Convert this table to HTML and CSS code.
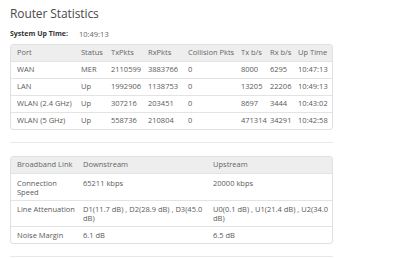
FILE: index.html
```html
<!DOCTYPE html>
<html>
<head>
<meta charset="utf-8">
<link rel="stylesheet" href="styles.css">
</head>
<body>
<div class="page">
  <h1 class="title">Router Statistics</h1>
  <div class="uptime"><span class="uptime-label">System Up Time:</span><span class="uptime-value">10:49:13</span></div>
  <div class="card first">
    <table class="grid ports">
      <thead>
        <tr><th class="c-port">Port</th><th class="c-status">Status</th><th class="c-tx">TxPkts</th><th class="c-rx">RxPkts</th><th class="c-col">Collision Pkts</th><th class="c-txb">Tx b/s</th><th class="c-rxb">Rx b/s</th><th class="c-up">Up Time</th></tr>
      </thead>
      <tbody>
        <tr><td>WAN</td><td>MER</td><td>2110599</td><td>3883766</td><td>0</td><td>8000</td><td>6295</td><td>10:47:13</td></tr>
        <tr><td>LAN</td><td>Up</td><td>1992906</td><td>1138753</td><td>0</td><td>13205</td><td>22206</td><td>10:49:13</td></tr>
        <tr><td>WLAN (2.4 GHz)</td><td>Up</td><td>307216</td><td>203451</td><td>0</td><td>8697</td><td>3444</td><td>10:43:02</td></tr>
        <tr><td>WLAN (5 GHz)</td><td>Up</td><td>558736</td><td>210804</td><td>0</td><td>471314</td><td>34291</td><td>10:42:58</td></tr>
      </tbody>
    </table>
  </div>
  <hr class="rule">
  <div class="card">
    <table class="grid link">
      <thead>
        <tr><th class="c-link">Broadband Link</th><th class="c-down">Downstream</th><th class="c-upst">Upstream</th></tr>
      </thead>
      <tbody>
        <tr class="tall"><td>Connection Speed</td><td>65211 kbps</td><td>20000 kbps</td></tr>
        <tr><td>Line Attenuation</td><td>D1(11.7 dB) , D2(28.9 dB) , D3(45.0 dB)</td><td>U0(0.1 dB) , U1(21.4 dB) , U2(34.0 dB)</td></tr>
        <tr><td>Noise Margin</td><td>6.1 dB</td><td>6.5 dB</td></tr>
      </tbody>
    </table>
  </div>
  <hr class="rule">
</div>
</body>
</html>
```

FILE: styles.css
```css
html, body {
  margin: 0;
  padding: 0;
  background: #ffffff;
}
body {
  font-family: "Open Sans", Lato, "Liberation Sans", sans-serif;
  color: #555555;
  font-size: 7.5px;
}
.page {
  width: 323px;
  padding: 5px 0 0 10px;
}
.title {
  margin: 0;
  font-size: 12px;
  font-weight: 400;
  color: #4a4a4a;
  line-height: 18px;
  letter-spacing: -0.1px;
}
.uptime {
  display: flex;
  margin-top: 6px;
  line-height: 10px;
  height: 12px;
}
.uptime-label {
  width: 69px;
  font-size: 7px;
  font-weight: 700;
  color: #333333;
}
.uptime-value {
  color: #666666;
}
.card {
  margin-top: 13px;
  border: 1px solid #e0e0e0;
  border-radius: 3px;
  overflow: hidden;
}
.card.first {
  margin-top: 3px;
}
.grid {
  width: 100%;
  border-collapse: collapse;
  table-layout: fixed;
}
.grid th,
.grid td {
  box-sizing: border-box;
  text-align: left;
  padding: 0 0 0 6px;
  line-height: 9px;
  white-space: nowrap;
}
.grid th {
  background: #eeeeee;
  font-weight: 400;
  color: #666666;
  height: 16px;
  vertical-align: middle;
}
.grid td {
  border-top: 1px solid #e3e3e3;
  color: #5a5a5a;
  height: 17px;
  vertical-align: middle;
}
.c-port { width: 64px; }
.c-status { width: 30px; }
.c-tx { width: 37px; }
.c-rx { width: 40px; }
.c-col { width: 53px; }
.c-txb { width: 29px; }
.c-rxb { width: 28px; }
.link .c-link { width: 66px; }
.link .c-down { width: 130px; }
.link td {
  white-space: normal;
  padding: 4px 1px 3px 6px;
  height: 17px;
  vertical-align: top;
}
.link .tall td {
  padding-top: 5px;
  padding-bottom: 3px;
}
.rule {
  margin: 12px 0 0 0;
  border: 0;
  border-top: 1px solid #e8e8e8;
  height: 0;
}
```
